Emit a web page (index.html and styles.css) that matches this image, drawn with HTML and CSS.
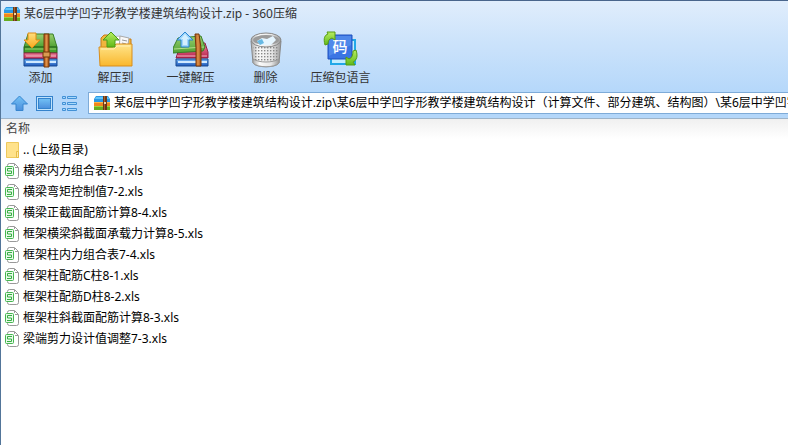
FILE: index.html
```html
<!DOCTYPE html>
<html lang="zh-CN">
<head>
<meta charset="utf-8">
<title>某6层中学凹字形教学楼建筑结构设计.zip - 360压缩</title>
<link rel="stylesheet" href="styles.css">
</head>
<body>
<svg class="defs" aria-hidden="true">
  <defs>
    <linearGradient id="green" x1="0" y1="0" x2="0" y2="1"><stop offset="0" stop-color="#9bd070"/><stop offset="1" stop-color="#4fa233"/></linearGradient>
    <linearGradient id="lime" x1="0" y1="0" x2="0" y2="1"><stop offset="0" stop-color="#b9ee62"/><stop offset="1" stop-color="#5fb918"/></linearGradient>
    <linearGradient id="red" x1="0" y1="0" x2="0" y2="1"><stop offset="0" stop-color="#f08a9f"/><stop offset="1" stop-color="#b81f4c"/></linearGradient>
    <linearGradient id="blue" x1="0" y1="0" x2="0" y2="1"><stop offset="0" stop-color="#75b7f5"/><stop offset="1" stop-color="#1d56b8"/></linearGradient>
    <linearGradient id="gold" x1="0" y1="0" x2="0" y2="1"><stop offset="0" stop-color="#ffdf7e"/><stop offset="1" stop-color="#f8a91c"/></linearGradient>
    <linearGradient id="strap"><stop offset="0" stop-color="#a9561c"/><stop offset=".5" stop-color="#e09148"/><stop offset="1" stop-color="#a04d14"/></linearGradient>
    <linearGradient id="folder" x1="0" y1="0" x2="0" y2="1"><stop offset="0" stop-color="#ffe58b"/><stop offset="1" stop-color="#f9b72d"/></linearGradient>
    <linearGradient id="nav" x1="0" y1="0" x2="0" y2="1"><stop offset="0" stop-color="#73c2f6"/><stop offset="1" stop-color="#4c8fdc"/></linearGradient>
    <linearGradient id="metal"><stop offset="0" stop-color="#a9a9a9"/><stop offset=".25" stop-color="#fafafa"/><stop offset=".7" stop-color="#e6e6e6"/><stop offset="1" stop-color="#999"/></linearGradient>
    <pattern id="holes" width="3" height="3" patternUnits="userSpaceOnUse"><rect x="1" y="1" width="1.4" height="1.4" fill="#888"/></pattern>
    <symbol id="archive" viewBox="0 0 16 14">
      <path d="M2 0h12l2 3v4H0V3z" fill="#2b98e4"/><path d="M2 1h12l1 2H1z" fill="#62c5fa"/>
      <path d="M0 6h16v4H0z" fill="#f0861c"/><path d="M0 6h16v1H0z" fill="#ffb545"/>
      <path d="M0 10h16v4H0z" fill="#68ad20"/><path d="M0 10h16v1H0z" fill="#9bd63c"/>
      <path d="M9 0h4v14H9z" fill="#6b3717"/><path d="M10 0h1v14h-1z" fill="#a5632c"/><path d="M10 6h2v2h-2z" fill="#f1d6a0"/>
    </symbol>
    <symbol id="xls" viewBox="0 0 14 16">
      <path d="M2.500 2.500q0-2 2-2h5l4 4v9q0 2-2 2h-7q-2 0-2-2z" fill="#fff" stroke="#999"/>
      <path d="M9.500 1v3.500H13" fill="none" stroke="#999"/>
      <rect x="0" y="3" width="10" height="10" fill="#fff"/>
      <rect x=".5" y="3.500" width="8" height="9" rx="1" fill="#e9f9ea" stroke="#45b650"/>
      <path d="M7 5.500H2.500V8h4v2.500H2" fill="none" stroke="#36ae42"/>
    </symbol>
  </defs>
</svg>
<div class="window">
  <header class="chrome">
    <div class="titlebar">
      <svg class="app-icon"><use href="#archive"/></svg>
      <h1>某6层中学凹字形教学楼建筑结构设计.zip - 360压缩</h1>
    </div>
    <nav class="toolbar" aria-label="工具栏">
      <button type="button">
        <svg class="tool-icon" viewBox="0 0 36 38">
          <path d="M5 3h25l4 13H1z" fill="url(#green)" stroke="#397e28"/>
          <path d="M1 16h33v6H1z" fill="#45a02e" stroke="#246019"/><path d="M2 18h31" stroke="#9acd70"/>
          <path d="M1 22h33v6H1z" fill="url(#red)" stroke="#922044"/><path d="M3 25h30" stroke="#f7c1ce"/>
          <path d="M1 28h33v7H1z" fill="url(#blue)" stroke="#184a93"/><path d="M3 31h30" stroke="#d0e9ff" stroke-width="2"/>
          <path d="M21 3h5v33h-5z" fill="url(#strap)" stroke="#773609"/><path d="M20 21h7v5h-7z" fill="#d89b51" stroke="#733707"/>
          <path d="M5 2h8v7h4L9 17 1 9h4z" fill="url(#gold)" stroke="#df8b15"/>
        </svg>
        <span>添加</span>
      </button>
      <button type="button">
        <svg class="tool-icon" viewBox="0 0 36 38">
          <path d="M3 34V7l3-3h7l3 4h17v26z" fill="#f1b53e" stroke="#c67d19"/>
          <path d="M10 6l12-1 1 15H10z" fill="#fff" stroke="#bbb"/><path d="M22 5l9 2-2 13h-8z" fill="#f8f8f8" stroke="#aaa"/><path d="M24 9l5 1M24 12l4 1" stroke="#999"/>
          <path d="M1 16h14l3-3h16v22H2z" fill="url(#folder)" stroke="#d88d1d"/><path d="M3 18h13l3-3h13" fill="none" stroke="#fff0b6"/>
          <path d="M13 1l8 8h-4v7H9V9H5z" fill="url(#lime)" stroke="#4c9b18"/>
        </svg>
        <span>解压到</span>
      </button>
      <button type="button">
        <svg class="tool-icon" viewBox="0 0 36 38">
          <path d="M8 12h24l3 9v6H3z" fill="url(#red)" stroke="#922044"/><path d="M4 25h30" stroke="#f6b9c8"/>
          <path d="M3 28h32v7H3z" fill="url(#blue)" stroke="#184a93"/><path d="M5 31h29" stroke="#d0e9ff" stroke-width="2"/>
          <path d="M5 7l23-2 4 11-2 4-30 2v-5z" fill="url(#green)" stroke="#397e28"/><path d="M1 18l30-2" stroke="#b4df8c"/>
          <path d="M22 3h4l2 14v18h-5V17z" fill="url(#strap)" stroke="#773609"/>
          <path d="M12 1l8 8h-4v7H8V9H4z" fill="#9ed6fb" stroke="#2984d0"/><path d="M12 3l4 5h-2v6h-4V8H8z" fill="#d4efff"/>
        </svg>
        <span>一键解压</span>
      </button>
      <button type="button">
        <svg class="tool-icon" viewBox="0 0 36 38">
          <path d="M3 10h30l-2 22c-3 5-23 5-26 0z" fill="url(#metal)" stroke="#888"/>
          <path d="M5 15h26l-2 15c-4 3-18 3-22 0z" fill="url(#holes)"/>
          <path d="M5 28c6 4 20 4 26 0v4c-5 5-21 5-26 0z" fill="url(#metal)" stroke="#999"/>
          <ellipse cx="18" cy="9" rx="15" ry="7" fill="url(#metal)" stroke="#888"/><ellipse cx="18" cy="9" rx="13" ry="5" fill="#9b9b9b"/>
          <path d="M9 10l5-3 5 1 6-3 3 4-5 5H12z" fill="#e5f5ff"/><path d="M9 10l5-2 2 4-4 2z" fill="#67b9e4"/>
        </svg>
        <span>删除</span>
      </button>
      <button type="button">
        <svg class="tool-icon" viewBox="0 0 36 38">
          <path d="M8 9h24v24H8z" fill="#c2edff" stroke="#21a8e8" stroke-width="2"/>
          <path d="M5 4h24v24H5z" fill="#3b75e4" stroke="#1e50bd"/><path d="M6 5h22v9L6 25z" fill="#5e94ef" opacity=".6"/>
          <text class="code-mark" x="17" y="21">码</text>
          <path d="M2 14C0 7 2 4 5 3L4 1h8v8L9 7C6 8 5 10 5 13z" fill="url(#lime)" stroke="#579c12"/>
          <path d="M33 19c2 6 1 10-3 12l2 3h-9v-8l3 2c3-1 4-4 4-8z" fill="url(#lime)" stroke="#579c12"/>
        </svg>
        <span>压缩包语言</span>
      </button>
    </nav>
    <div class="location">
      <div class="views">
        <button type="button" aria-label="向上"><svg viewBox="0 0 17 17"><path d="M8.500 1l8 8H12v6.500H5V9H.5z" fill="url(#nav)" stroke="#3785cf"/></svg></button>
        <button type="button" aria-label="图标视图"><svg viewBox="0 0 17 17"><rect x=".5" y="1.500" width="16" height="14" fill="#bfe2fb" stroke="#3482cc"/><rect x="2.500" y="3.500" width="12" height="10" fill="url(#nav)" stroke="#3482cc"/></svg></button>
        <button type="button" aria-label="列表视图"><svg viewBox="0 0 17 17"><path d="M1.500 1.500h3v2h-3zM1.500 7.500h3v2h-3zM1.500 13.500h3v2h-3zM6.500 1.500h9v2h-9zM6.500 7.500h9v2h-9zM6.500 13.500h9v2h-9z" fill="#a7d8fb" stroke="#4291d6"/></svg></button>
      </div>
      <label class="address">
        <svg class="app-icon"><use href="#archive"/></svg>
        <input type="text" aria-label="路径" value="某6层中学凹字形教学楼建筑结构设计.zip\某6层中学凹字形教学楼建筑结构设计（计算文件、部分建筑、结构图）\某6层中学凹字形教学楼建筑结构设计">
      </label>
    </div>
  </header>
  <main>
    <table>
      <thead><tr><th scope="col">名称</th></tr></thead>
      <tbody>
        <tr><td><a href="#"><svg viewBox="0 0 14 16"><path d="M1.500.500h12v15h-12z" fill="#ffe28b" stroke="#eec95d"/><path d="M11.500 9.500h2v6h-2z" fill="#ffeaa7" stroke="#e7bd48"/></svg>.. (上级目录)</a></td></tr>
        <tr><td><a href="#"><svg><use href="#xls"/></svg>横梁内力组合表7-1.xls</a></td></tr>
        <tr><td><a href="#"><svg><use href="#xls"/></svg>横梁弯矩控制值7-2.xls</a></td></tr>
        <tr><td><a href="#"><svg><use href="#xls"/></svg>横梁正截面配筋计算8-4.xls</a></td></tr>
        <tr><td><a href="#"><svg><use href="#xls"/></svg>框架横梁斜截面承载力计算8-5.xls</a></td></tr>
        <tr><td><a href="#"><svg><use href="#xls"/></svg>框架柱内力组合表7-4.xls</a></td></tr>
        <tr><td><a href="#"><svg><use href="#xls"/></svg>框架柱配筋C柱8-1.xls</a></td></tr>
        <tr><td><a href="#"><svg><use href="#xls"/></svg>框架柱配筋D柱8-2.xls</a></td></tr>
        <tr><td><a href="#"><svg><use href="#xls"/></svg>框架柱斜截面配筋计算8-3.xls</a></td></tr>
        <tr><td><a href="#"><svg><use href="#xls"/></svg>梁端剪力设计值调整7-3.xls</a></td></tr>
      </tbody>
    </table>
  </main>
</div>
</body>
</html>
```
FILE: styles.css
```css
* { box-sizing: border-box; }
body {
  margin: 0;
  font: 12px/18px "Noto Sans", "Noto Sans CJK SC", sans-serif;
  color: #000;
  background: #fff;
}
svg { display: block; flex: none; }
.defs { position: absolute; width: 0; height: 0; }
button {
  padding: 0;
  border: 0;
  background: none;
  font: inherit;
  color: inherit;
}
.window {
  min-height: 100vh;
  overflow: hidden;
  border-top: 1px solid #49658c;
  border-left: 1px solid #527599;
}
.chrome {
  background: linear-gradient(#e0edfc, #cce3fb 35%, #b4d7fa 80%, #b4d7fa);
  border-bottom: 1px solid #9eb4c9;
}
.titlebar {
  display: flex;
  align-items: center;
  gap: 4px;
  height: 26px;
  padding-left: 3px;
}
.app-icon { width: 16px; height: 14px; }
h1 {
  margin: 0;
  font-size: 12px;
  font-weight: 400;
  color: #333;
  white-space: nowrap;
}
.toolbar {
  display: flex;
  height: 64px;
  padding: 4px 0 0 2px;
  color: #333;
}
.toolbar button {
  display: flex;
  flex-direction: column;
  align-items: center;
  width: 75px;
}
.tool-icon { width: 36px; height: 38px; }
.code-mark {
  fill: #fff;
  font: 500 15px "Noto Sans CJK SC", sans-serif;
  text-anchor: middle;
}
.location {
  display: flex;
  align-items: center;
  gap: 10px;
  padding: 1px 0 4px 10px;
}
.views { display: flex; gap: 8px; }
.views svg { width: 17px; height: 17px; }
.address {
  display: flex;
  flex: 1;
  align-items: center;
  gap: 4px;
  min-width: 0;
  height: 22px;
  padding-left: 5px;
  background: #fff;
  border: 1px solid #7eabd8;
  border-right: 0;
}
.address input {
  flex: 1;
  min-width: 0;
  padding: 0;
  border: 0;
  outline: 0;
  background: none;
  font: inherit;
  color: inherit;
}
table { width: 100%; border-collapse: collapse; }
thead { background: linear-gradient(#f0f0f0, #fff); }
th {
  height: 20px;
  padding: 0 5px;
  font-weight: 400;
  text-align: left;
  color: #444;
}
td { height: 21px; padding: 0 4px; }
td a {
  display: flex;
  align-items: center;
  gap: 4px;
  color: inherit;
  text-decoration: none;
  white-space: nowrap;
}
td svg { width: 14px; height: 16px; }
```
